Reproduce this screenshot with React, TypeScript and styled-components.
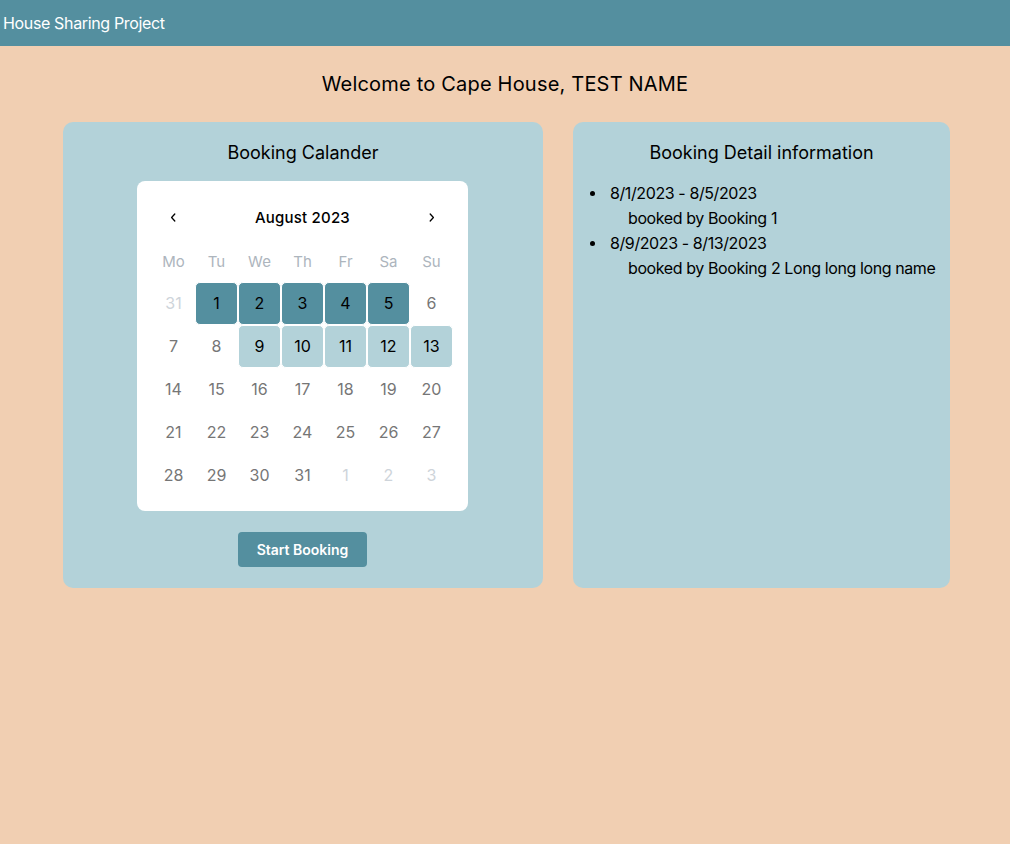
import React from "react";
import styled, { createGlobalStyle } from "styled-components";

const Global = createGlobalStyle`
  html, body { margin: 0; padding: 0; }
  body {
    background: #f1cfb2;
    font-family: Inter, "Noto Sans", sans-serif;
    color: #000;
    min-height: 844px;
  }
`;

const Header = styled.header`
  height: 46px;
  background: #548f9f;
  display: flex;
  align-items: center;
  padding-left: 3px;
  padding-bottom: 1px;
  box-sizing: border-box;
  color: #fff;
  font-size: 16px;
  letter-spacing: -0.35px;
`;

const Welcome = styled.h1`
  margin: 0;
  padding-top: 26px;
  height: 50px;
  box-sizing: border-box;
  text-align: center;
  font-size: 20px;
  font-weight: 400;
  line-height: 24px;
  letter-spacing: 0.2px;
`;

const Row = styled.div`
  display: flex;
  gap: 30px;
  padding: 26px 60px 0 63px;
`;

const Card = styled.section<{ $w?: number }>`
  background: #b3d2d9;
  border-radius: 10px;
  height: 466px;
  box-sizing: border-box;
  ${(p) => (p.$w ? `width: ${p.$w}px; flex: none;` : "flex: 1;")}
  display: flex;
  flex-direction: column;
  align-items: center;
  padding-top: 20px;
`;

const CardTitle = styled.h2`
  margin: 0;
  font-size: 18px;
  font-weight: 400;
  line-height: 22px;
`;

const Calendar = styled.div`
  margin-top: 17px;
  align-self: flex-start;
  margin-left: 74px;
  width: 331px;
  box-sizing: border-box;
  background: #fff;
  border-radius: 8px;
  padding: 15px 15px 14px 15px;
`;

const CalHeader = styled.div`
  display: flex;
  align-items: center;
  justify-content: space-between;
  height: 42px;
`;

const Arrow = styled.button`
  width: 43px;
  height: 42px;
  border: none;
  background: none;
  padding: 0;
  display: flex;
  align-items: center;
  justify-content: center;
  color: #000;
`;

const MonthLabel = styled.div`
  font-size: 15px;
  font-weight: 500;
  letter-spacing: 0.2px;
`;

const Grid = styled.div`
  display: grid;
  grid-template-columns: repeat(7, 43px);
`;

const Weekday = styled.div`
  height: 44px;
  padding-top: 2px;
  box-sizing: border-box;
  display: flex;
  align-items: center;
  justify-content: center;
  color: #adb5bd;
  font-size: 15px;
`;

type Kind = "out" | "normal" | "dark" | "light";

const Day = styled.div<{ $kind: Kind }>`
  height: 43px;
  padding-bottom: 1px;
  display: flex;
  align-items: center;
  justify-content: center;
  font-size: 16px;
  box-sizing: border-box;
  border: 1px solid #fff;
  border-radius: 5px;
  color: ${(p) =>
    p.$kind === "out" ? "#ced4da" : p.$kind === "normal" ? "#767676" : "#000"};
  background: ${(p) =>
    p.$kind === "dark" ? "#548f9f" : p.$kind === "light" ? "#b3d2d9" : "transparent"};
`;

const StartButton = styled.button`
  margin-top: 21px;
  align-self: flex-start;
  margin-left: 175px;
  width: 129px;
  height: 35px;
  border: none;
  border-radius: 4px;
  background: #548f9f;
  color: #fff;
  font-family: Inter, sans-serif;
  font-size: 14px;
  font-weight: 600;
`;

const List = styled.ul`
  align-self: stretch;
  list-style: none;
  margin: 17px 0 0 0;
  padding-left: 37px;
  font-size: 16px;
  line-height: 25px;
  letter-spacing: -0.4px;
`;

const Item = styled.li`
  position: relative;
  &::before {
    content: "";
    position: absolute;
    left: -20px;
    top: 10px;
    width: 5px;
    height: 5px;
    border-radius: 50%;
    background: #000;
  }
`;

const Sub = styled.div`
  padding-left: 18px;
`;

const days: [string, Kind][] = [
  ["31", "out"], ["1", "dark"], ["2", "dark"], ["3", "dark"], ["4", "dark"], ["5", "dark"], ["6", "normal"],
  ["7", "normal"], ["8", "normal"], ["9", "light"], ["10", "light"], ["11", "light"], ["12", "light"], ["13", "light"],
  ["14", "normal"], ["15", "normal"], ["16", "normal"], ["17", "normal"], ["18", "normal"], ["19", "normal"], ["20", "normal"],
  ["21", "normal"], ["22", "normal"], ["23", "normal"], ["24", "normal"], ["25", "normal"], ["26", "normal"], ["27", "normal"],
  ["28", "normal"], ["29", "normal"], ["30", "normal"], ["31", "normal"], ["1", "out"], ["2", "out"], ["3", "out"],
];

const weekdays = ["Mo", "Tu", "We", "Th", "Fr", "Sa", "Su"];

export default function App() {
  return (
    <>
      <Global />
      <Header>House Sharing Project</Header>
      <Welcome>Welcome to Cape House, TEST NAME</Welcome>
      <Row>
        <Card $w={480}>
          <CardTitle>Booking Calander</CardTitle>
          <Calendar>
            <CalHeader>
              <Arrow aria-label="previous">
                <svg width="15" height="15" viewBox="0 0 15 15" fill="none">
                  <path d="M8.8 4 5.6 7.5 8.8 11" stroke="#000" strokeWidth="1.3" strokeLinecap="round" strokeLinejoin="round" />
                </svg>
              </Arrow>
              <MonthLabel>August 2023</MonthLabel>
              <Arrow aria-label="next">
                <svg width="15" height="15" viewBox="0 0 15 15" fill="none">
                  <path d="M6.2 4 9.4 7.5 6.2 11" stroke="#000" strokeWidth="1.3" strokeLinecap="round" strokeLinejoin="round" />
                </svg>
              </Arrow>
            </CalHeader>
            <Grid>
              {weekdays.map((w) => (
                <Weekday key={w}>{w}</Weekday>
              ))}
              {days.map(([d, k], i) => (
                <Day key={i} $kind={k}>
                  {d}
                </Day>
              ))}
            </Grid>
          </Calendar>
          <StartButton>Start Booking</StartButton>
        </Card>
        <Card>
          <CardTitle>Booking Detail information</CardTitle>
          <List>
            <Item>
              8/1/2023 - 8/5/2023
              <Sub>booked by Booking 1</Sub>
            </Item>
            <Item>
              8/9/2023 - 8/13/2023
              <Sub>booked by Booking 2 Long long long name</Sub>
            </Item>
          </List>
        </Card>
      </Row>
    </>
  );
}
